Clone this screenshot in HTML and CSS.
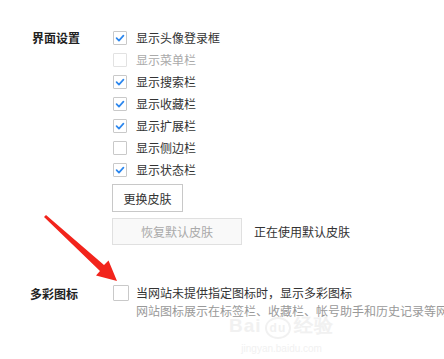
FILE: index.html
```html
<!DOCTYPE html>
<html>
<head>
<meta charset="utf-8">
<link rel="stylesheet" href="styles.css">
</head>
<body>
<div class="page">
  <section class="group">
    <div class="label">界面设置</div>
    <div class="content">
      <div class="opt"><span class="cb on"><svg viewBox="0 0 14 14"><path d="M3 7.2 L5.8 10 L11 4.3"/></svg></span><span class="txt">显示头像登录框</span></div>
      <div class="opt disabled"><span class="cb"></span><span class="txt">显示菜单栏</span></div>
      <div class="opt"><span class="cb on"><svg viewBox="0 0 14 14"><path d="M3 7.2 L5.8 10 L11 4.3"/></svg></span><span class="txt">显示搜索栏</span></div>
      <div class="opt"><span class="cb on"><svg viewBox="0 0 14 14"><path d="M3 7.2 L5.8 10 L11 4.3"/></svg></span><span class="txt">显示收藏栏</span></div>
      <div class="opt"><span class="cb on"><svg viewBox="0 0 14 14"><path d="M3 7.2 L5.8 10 L11 4.3"/></svg></span><span class="txt">显示扩展栏</span></div>
      <div class="opt"><span class="cb"></span><span class="txt">显示侧边栏</span></div>
      <div class="opt"><span class="cb on"><svg viewBox="0 0 14 14"><path d="M3 7.2 L5.8 10 L11 4.3"/></svg></span><span class="txt">显示状态栏</span></div>
      <button class="btn">更换皮肤</button>
      <div class="btn-row">
        <button class="btn btn-disabled">恢复默认皮肤</button>
        <span class="status">正在使用默认皮肤</span>
      </div>
    </div>
  </section>
  <section class="group group2">
    <div class="label">多彩图标</div>
    <div class="content">
      <div class="opt opt2"><span class="cb"></span><span class="txt">当网站未提供指定图标时，显示多彩图标</span></div>
      <div class="desc">网站图标展示在标签栏、收藏栏、帐号助手和历史记录等网站图标</div>
    </div>
  </section>
  <svg class="arrow" width="130" height="90" viewBox="0 200 130 90">
    <path d="M44 217 L46 215 L104 265 L108.5 260.5 L117 281 L96 275.5 L100 271 Z" fill="#f2241c"/>
  </svg>
  <div class="wm">
    <div class="wm1">Bai<span class="du">du</span>经验</div>
    <div class="wm2">jingyan.baidu.com</div>
  </div>
</div>
</body>
</html>
```

FILE: styles.css
```css
html, body {
  margin: 0;
  padding: 0;
  background: #fff;
}
body {
  font-family: "Noto Sans CJK SC", "Noto Sans", sans-serif;
  font-size: 12px;
  color: #333;
  width: 444px;
  height: 359px;
  overflow: hidden;
}
.page {
  position: relative;
  padding-top: 27px;
  overflow: hidden;
  height: 359px;
  box-sizing: border-box;
}
.group {
  display: flex;
}
.label {
  width: 112px;
  padding-left: 32px;
  box-sizing: border-box;
  font-weight: bold;
  color: #222;
  line-height: 22px;
  flex: none;
}
.content {
  display: flex;
  flex-direction: column;
  align-items: flex-start;
  white-space: nowrap;
  min-width: 0;
}
.opt {
  display: flex;
  align-items: center;
  height: 22px;
}
.cb {
  width: 14px;
  height: 14px;
  border: 1px solid #c9c9c9;
  box-sizing: border-box;
  border-radius: 1px;
  margin-left: 1px;
  margin-right: 9px;
  display: flex;
  background: #fff;
}
.cb svg {
  width: 12px;
  height: 12px;
}
.cb svg path {
  fill: none;
  stroke: #2c87ee;
  stroke-width: 2;
  stroke-linecap: round;
  stroke-linejoin: round;
}
.disabled .cb {
  border-color: #e2e2e2;
}
.disabled .txt {
  color: #aaa;
}
.txt {
  line-height: 22px;
}
.btn {
  font-family: inherit;
  font-size: 12px;
  color: #333;
  background: #fff;
  border: 1px solid #c8c8c8;
  border-radius: 0;
  height: 28px;
  padding: 0 10px;
  margin-top: 3px;
  width: 71px;
}
.btn-row {
  display: flex;
  align-items: center;
  margin-top: 6px;
}
.btn-row .btn {
  margin-top: 0;
}
.btn-disabled {
  width: 130px;
  height: 27px;
  background: #f9f9f9;
  border-color: #e0e0e0;
  color: #aaa;
}
.status {
  margin-left: 12px;
  color: #333;
}
.group2 {
  margin-top: 39px;
}
.group2 .label {
  padding-left: 30px;
  line-height: 20px;
}
.opt2 {
  height: 18px;
}
.opt2 .cb {
  width: 16px;
  height: 16px;
  margin-left: 1px;
  margin-right: 7px;
}
.desc {
  margin-left: 24px;
  color: #999;
  line-height: 18px;
}
.arrow {
  position: absolute;
  left: 0;
  top: 200px;
}
.wm {
  position: absolute;
  left: 229px;
  top: 317px;
  color: #f1f1f1;
  font-family: "Liberation Sans", sans-serif;
  text-align: center;
}
.wm1 {
  font-size: 19px;
  font-weight: bold;
  line-height: 18px;
  letter-spacing: 1px;
}
.wm1 .du {
  display: inline-block;
  border: 2px solid #f1f1f1;
  border-radius: 50%;
  font-size: 12px;
  padding: 0 3px;
  margin: 0 3px;
}
.wm2 {
  font-size: 10px;
  line-height: 16px;
  margin-top: 2px;
}
```
